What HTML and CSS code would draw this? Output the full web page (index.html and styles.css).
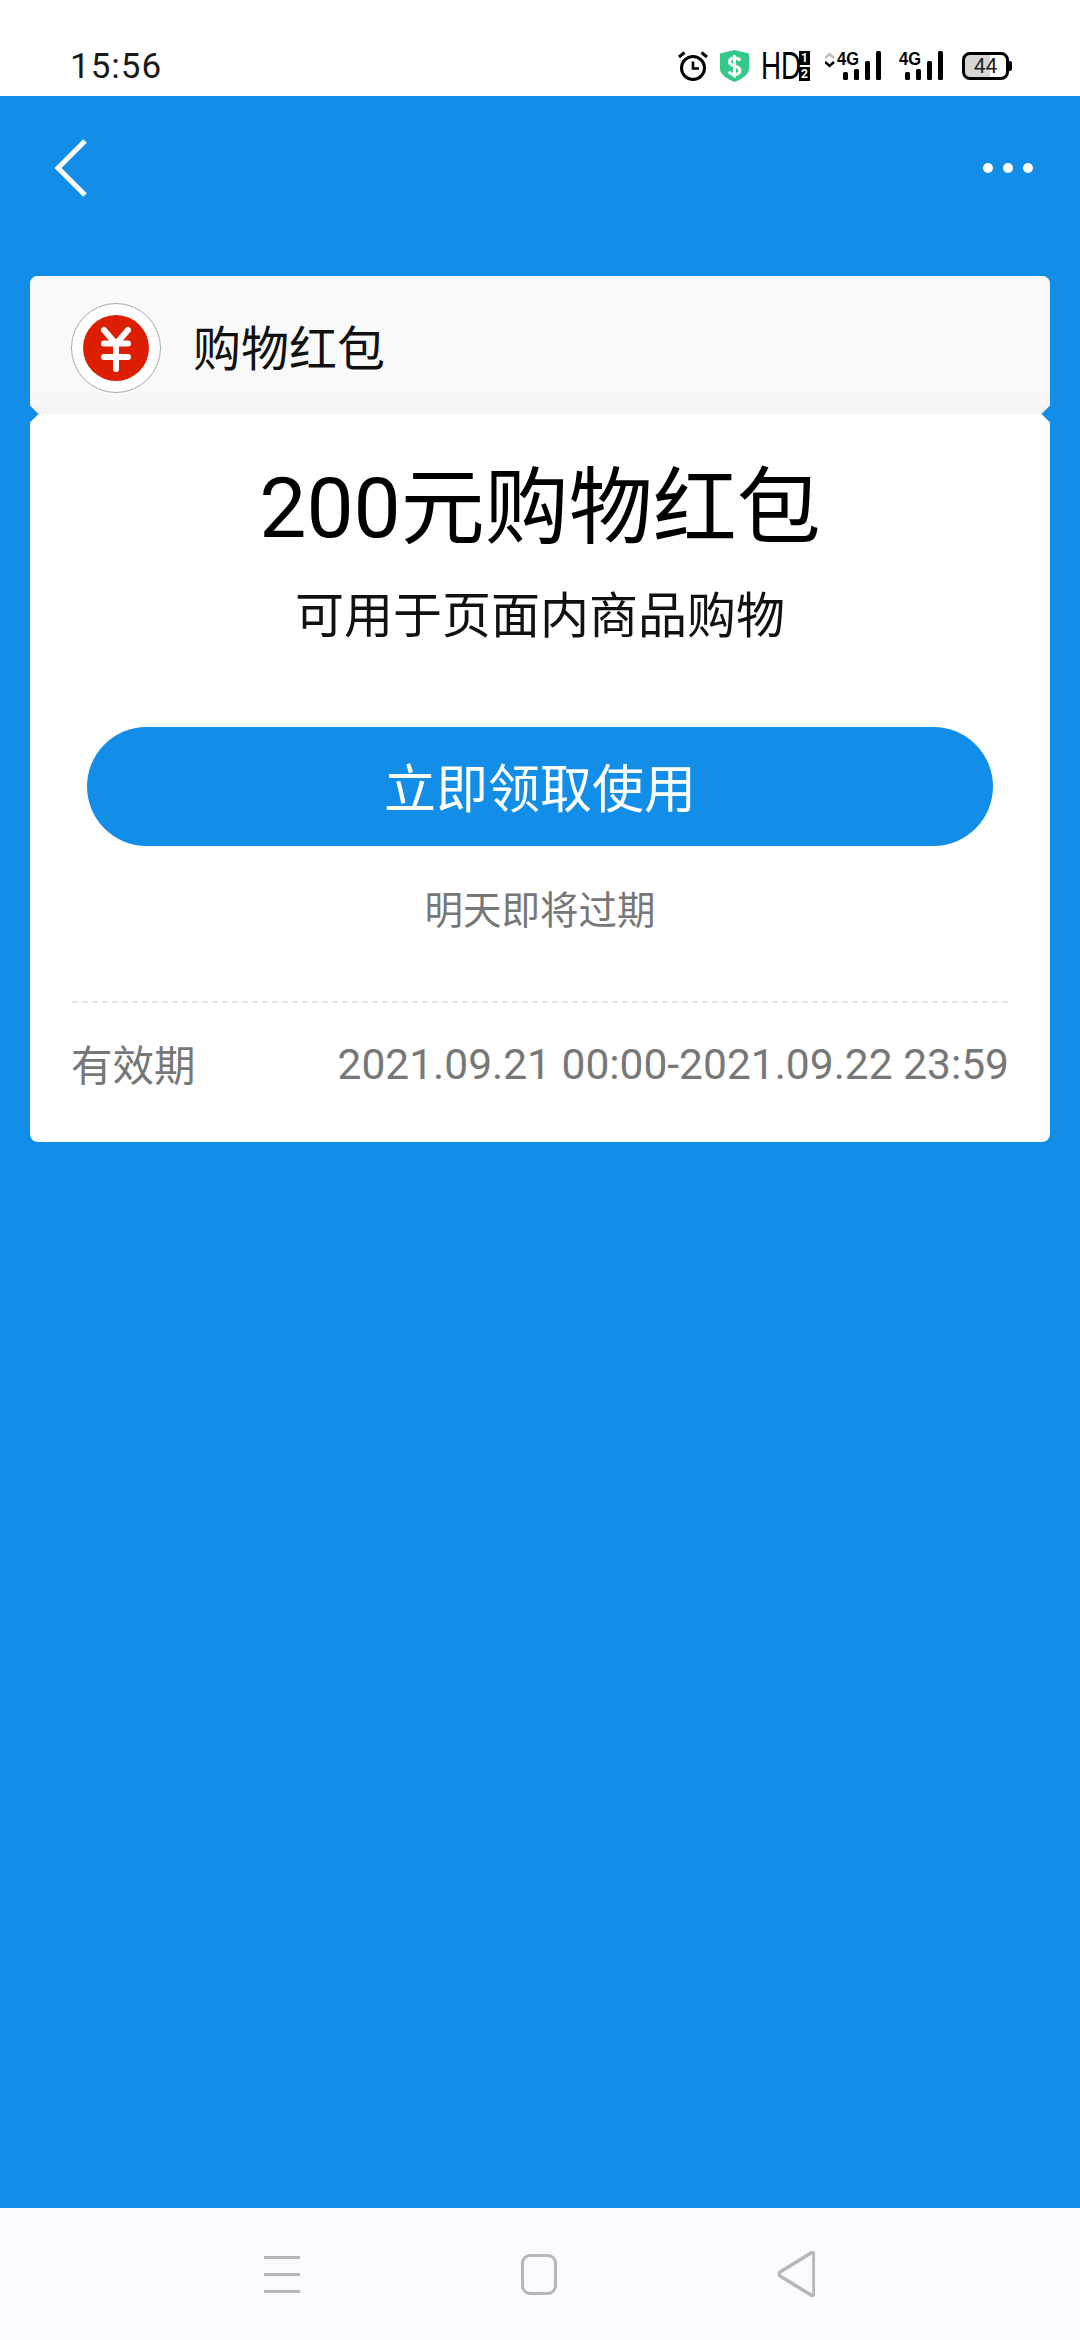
FILE: index.html
```html
<!DOCTYPE html>
<html lang="zh-CN">
<head>
    <meta charset="UTF-8">
    <meta name="viewport" content="width=device-width, initial-scale=1.0">
    <title>购物红包</title>
    <link rel="stylesheet" href="styles.css">
</head>
<body>
    <div class="page">
        <div class="status-bar">
            <span class="time">15:56</span>
            <div class="status-icons">
                <svg class="ic-alarm" width="30" height="30" viewBox="0 0 30 30">
                    <circle cx="15" cy="17" r="11.5" fill="none" stroke="#000" stroke-width="3"/>
                    <path d="M15 10.5V17.5H21" fill="none" stroke="#000" stroke-width="2.6"/>
                    <path d="M1 6L6.5 1.5M29 6L23.5 1.5" fill="none" stroke="#000" stroke-width="3"/>
                </svg>
                <svg class="ic-shield" width="29" height="32" viewBox="0 0 29 32">
                    <path d="M14.5 0L29 3.5V19C29 25 20 30 14.5 32C9 30 0 25 0 19V3.5Z" fill="#34c88a"/>
                    <path d="M20 10.5C19 8.5 17 8 14.5 8C11.5 8 9.5 9.5 9.5 12C9.5 17 20 15 20 20.5C20 23 17.5 24.5 14.5 24.5C12 24.5 9.8 23.5 9 21.5M14.5 5V27.5" fill="none" stroke="#fff" stroke-width="3"/>
                </svg>
                <span class="hd">HD</span>
                <div class="hd-badge"><span>1</span><span>2</span></div>
                <svg class="ic-signal first" width="56" height="40" viewBox="0 -4 56 40">
                    <path d="M0 8L4.5 4L9 8" fill="none" stroke="#bbb" stroke-width="2.4"/>
                    <path d="M0 12L4.5 16L9 12" fill="none" stroke="#000" stroke-width="2.4"/>
                    <text x="12" y="15" class="net" textLength="22" lengthAdjust="spacingAndGlyphs">4G</text>
                    <rect x="18" y="22" width="5" height="8" rx="1.5"/>
                    <rect x="29" y="19" width="5" height="11" rx="1.5"/>
                    <rect x="40" y="11" width="5" height="19" rx="1.5"/>
                    <rect x="51" y="1" width="5" height="29" rx="1.5"/>
                </svg>
                <svg class="ic-signal" width="44" height="40" viewBox="0 -4 44 40">
                    <text x="0" y="15" class="net" textLength="22" lengthAdjust="spacingAndGlyphs">4G</text>
                    <rect x="6" y="22" width="5" height="8" rx="1.5"/>
                    <rect x="17" y="19" width="5" height="11" rx="1.5"/>
                    <rect x="28" y="11" width="5" height="19" rx="1.5"/>
                    <rect x="39" y="1" width="5" height="29" rx="1.5"/>
                </svg>
                <div class="battery">
                    <div class="battery-body"><span>44</span></div>
                    <div class="battery-cap"></div>
                </div>
            </div>
        </div>

        <div class="top-bar">
            <svg width="40" height="64" viewBox="0 0 40 64">
                <path d="M35 4L8 31L35 58" fill="none" stroke="#fff" stroke-width="5"/>
            </svg>
            <div class="more"><i></i><i></i><i></i></div>
        </div>

        <div class="card">
            <div class="card-head">
                <div class="logo">
                    <svg width="66" height="66" viewBox="0 0 66 66">
                        <circle cx="33" cy="33" r="33" fill="#dc1f02"/>
                        <path d="M21 15L33 29L45 15M21 28.5H45M21 42H45M33 29V54" fill="none" stroke="#fff" stroke-width="6" stroke-linecap="round"/>
                    </svg>
                </div>
                <span class="head-title">购物红包</span>
            </div>
            <i class="notch notch-left"></i>
            <i class="notch notch-right"></i>
            <div class="card-body">
                <h1 class="amount">200元购物红包</h1>
                <p class="desc">可用于页面内商品购物</p>
                <button type="button" class="use-btn">立即领取使用</button>
                <p class="expire">明天即将过期</p>
                <div class="valid-row">
                    <span class="valid-label">有效期</span>
                    <span class="valid-date">2021.09.21 00:00-2021.09.22 23:59</span>
                </div>
            </div>
        </div>

        <div class="nav-bar">
            <div class="nav-menu"><i></i><i></i><i></i></div>
            <div class="nav-home"></div>
            <svg width="38" height="48" viewBox="0 0 38 48">
                <path d="M34 3L3 22C2 23 2 25 3 26L34 45C36 46 37 45 37 43V5C37 3 36 2 34 3Z" fill="none" stroke="#b7b7ba" stroke-width="3.5" stroke-linejoin="round"/>
            </svg>
        </div>
    </div>
</body>
</html>
```

FILE: styles.css
```css
*{
    margin: 0;
    padding: 0;
    box-sizing: border-box;
}
body{
    font-family: Roboto, "Noto Sans CJK SC", sans-serif;
    background-color: #128ee9;
}
.page{
    display: flex;
    flex-direction: column;
    height: 2340px;
    background-color: #128ee9;
}

/* status bar */
.status-bar{
    display: flex;
    justify-content: space-between;
    align-items: center;
    height: 96px;
    padding: 36px 68px 0 70px;
    background-color: #fff;
}
.time{
    font-size: 35px;
    color: #1a1a1a;
    letter-spacing: 1px;
}
.status-icons{
    display: flex;
    align-items: center;
    color: #000;
}
.ic-shield{
    margin-left: 12px;
}
.hd{
    display: block;
    width: 37px;
    margin-left: 12px;
    font-family: "Liberation Sans", sans-serif;
    font-size: 38px;
    line-height: 44px;
    white-space: nowrap;
    transform: scaleX(0.73);
    transform-origin: left center;
}
.hd-badge{
    display: flex;
    flex-direction: column;
    gap: 2px;
    margin-left: 1px;
}
.hd-badge span{
    width: 11px;
    height: 14px;
    font-size: 12px;
    font-weight: 700;
    line-height: 14px;
    text-align: center;
    color: #fff;
    background-color: #000;
}
.ic-signal.first{
    margin-left: 15px;
}
.ic-signal{
    margin-left: 18px;
}
.net{
    font-family: "Liberation Sans", sans-serif;
    font-size: 19px;
    font-weight: 700;
}
.battery{
    display: flex;
    align-items: center;
    margin-left: 19px;
}
.battery-body{
    width: 47px;
    height: 28px;
    border: 3px solid #000;
    border-radius: 8px;
    background: linear-gradient(to right, #d6d6d6 62%, #fff 62%);
    text-align: center;
}
.battery-body span{
    display: block;
    font-size: 21px;
    line-height: 22px;
    color: #222;
}
.battery-cap{
    width: 3px;
    height: 10px;
    background-color: #000;
    border-radius: 0 2px 2px 0;
}

/* blue top bar */
.top-bar{
    display: flex;
    justify-content: space-between;
    align-items: flex-start;
    height: 180px;
    padding: 41px 47px 0 50px;
}
.more{
    display: flex;
    gap: 10px;
    margin-top: 26px;
}
.more i{
    width: 10px;
    height: 10px;
    border-radius: 50%;
    background-color: #fff;
}

/* card */
.card{
    position: relative;
    margin: 0 30px;
    height: 866px;
    border-radius: 8px;
    overflow: hidden;
    background-color: #fff;
}
.card-head{
    display: flex;
    align-items: center;
    height: 138px;
    padding-left: 41px;
    background: linear-gradient(to bottom, #f9f9f9 84%, #f4f4f4 100%);
}
.logo{
    display: flex;
    justify-content: center;
    align-items: center;
    width: 90px;
    height: 90px;
    margin-top: 6px;
    border: 1px solid #a9a9a9;
    border-radius: 50%;
    background-color: #fff;
}
.head-title{
    margin-left: 32px;
    font-size: 48px;
    color: #111;
}
.notch{
    position: absolute;
    top: 132px;
    width: 12px;
    height: 12px;
    transform: rotate(45deg);
    background-color: #128ee9;
}
.notch-left{
    left: -6px;
}
.notch-right{
    right: -6px;
}
.card-body{
    display: flex;
    flex-direction: column;
    align-items: center;
    padding: 40px 42px 0;
}
.amount{
    font-size: 84px;
    font-weight: 400;
    line-height: 110px;
    color: #000;
}
.desc{
    margin-top: 23px;
    font-size: 49px;
    line-height: 60px;
    color: #111;
}
.use-btn{
    width: 906px;
    height: 119px;
    margin-top: 80px;
    padding-bottom: 2px;
    border: none;
    border-radius: 60px;
    font-family: inherit;
    font-size: 52px;
    color: #fff;
    background-color: #128ee9;
}
.expire{
    margin-top: 40px;
    font-size: 38.5px;
    line-height: 50px;
    color: #777;
}
.valid-row{
    display: flex;
    justify-content: space-between;
    align-items: center;
    align-self: stretch;
    height: 122px;
    margin-top: 65px;
    border-top: 2px dashed #e4e4e4;
    color: #777;
}
.valid-label{
    margin-left: -1px;
    font-size: 41.5px;
}
.valid-date{
    margin-right: -1px;
    padding-top: 2px;
    font-size: 42.5px;
}

/* system nav */
.nav-bar{
    display: flex;
    justify-content: space-between;
    align-items: center;
    height: 132px;
    margin-top: auto;
    padding: 0 265px 0 264px;
    background-color: #fafbff;
}
.nav-menu{
    display: flex;
    flex-direction: column;
    gap: 14px;
    width: 36px;
}
.nav-menu i{
    height: 3px;
    background-color: #b7b7ba;
}
.nav-home{
    width: 36px;
    height: 41px;
    border: 3.5px solid #b7b7ba;
    border-radius: 9px;
}
```
